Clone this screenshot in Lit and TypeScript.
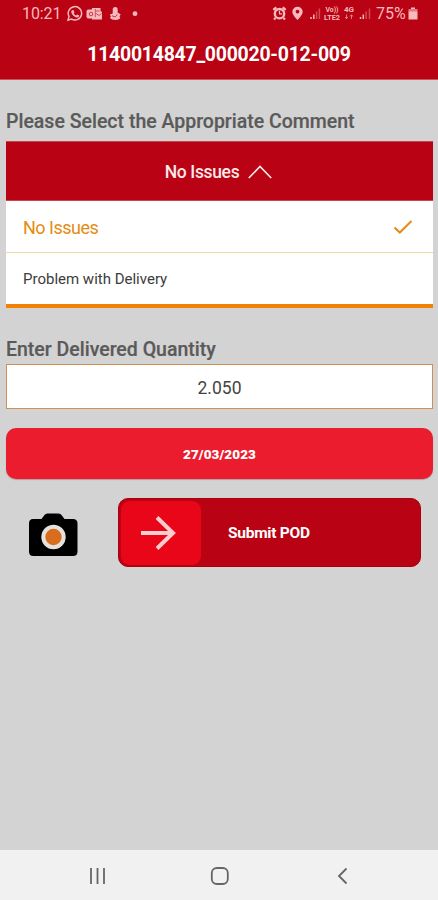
import { LitElement, html, css } from "lit";
import { customElement, state } from "lit/decorators.js";
import { classMap } from "lit/directives/class-map.js";

@customElement("status-bar")
class StatusBar extends LitElement {
  static styles = css`
    :host { display: flex; height: 28px; color: #f7b9bc; font: 400 16px/28px Roboto, sans-serif; }
    .time { margin-left: 22px; width: 45px; letter-spacing: -0.1px; white-space: nowrap; }
    .left { width: 78px; height: 28px; }
    .right { margin-left: auto; width: 104px; height: 28px; flex: none; }
    .tiny { font: 700 6.3px Roboto, sans-serif; fill: currentColor; }
    .battery-text { width: 31px; letter-spacing: 0; white-space: nowrap; }
    .battery { width: 10px; height: 28px; margin: 0 20px 0 1px; }
  `;

  render() {
    return html`
      <span class="time">10:21</span>
      <svg class="left" viewBox="67 0 78 28" fill="none" stroke="currentColor">
        <path stroke-width="1.5" d="M68 20.2l1-3.8a6.7 6.7 0 1 1 2.6 2.7z" />
        <path fill="currentColor" stroke="none" d="M72.1 10.2l1.3-.3 1.1 2.4-.8 1c.6 1.1 1.4 1.8 2.5 2.3l.9-1 2.1 1c0 1.6-1.3 2.2-2.6 1.9-2.7-.6-5.600-3.800-5.300-6 .1-.6.4-1 .8-1.300z" />
        <path fill="currentColor" stroke="none" d="M92 8h8.500v3l1.500 1v7.500H92z" />
        <rect x="87" y="10" width="8" height="8" rx="1" fill="currentColor" />
        <circle cx="91" cy="14" r="1.800" stroke="#b90213" stroke-width=".7" />
        <path stroke="#b90213" stroke-width=".6" d="M96 11h3.500M96 13.500l3 2 2.500-2M95.300 9v8" />
        <path fill="currentColor" stroke="none" d="M112.700 9.500a2.500 2.500 0 0 1 5 0v3.200l3 1.500-1.200 2.300.9 1.500c-1.800 2.500-8.200 2.600-10.600-.3l1.200-1-1.200-2.300 2.900-.8z" />
        <path stroke="#b90213" stroke-width=".8" d="M112 15.500c2 2 4.500 1.500 5-1" />
        <circle cx="135" cy="13.700" r="2.400" fill="currentColor" stroke="none" />
      </svg>
      <svg class="right" viewBox="272 0 104 28" fill="none" stroke="currentColor">
        <circle cx="279.500" cy="13.700" r="4.700" stroke-width="2.400" />
        <path stroke-width="2.200" d="M273.300 9.800l3-2.500M285.700 9.800l-3-2.500M275.500 18l-1.500 1.500M283.500 18l1.500 1.500" />
        <path stroke-width="1.200" d="M279.500 10.700v3.200h2.500" />
        <path fill="currentColor" stroke="none" fill-rule="evenodd" d="M297.500 6.700a5.200 5.200 0 0 1 5.200 5c0 3.300-5.200 8.300-5.200 8.300s-5.200-5-5.200-8.300a5.200 5.200 0 0 1 5.200-5zm0 3a1.900 1.900 0 1 0 0 3.800 1.900 1.900 0 0 0 0-3.800z" />
        <path stroke-width="1.500" d="M311 17v2M313.800 14.500v4.500" />
        <path stroke-width="1.500" opacity=".4" d="M316.600 11.500v7.500M319.400 8.500v10.500" />
        <g stroke="none">
          <text class="tiny" x="325.500" y="12" textLength="13" lengthAdjust="spacingAndGlyphs">Vo))</text>
          <text class="tiny" x="324" y="19.700" textLength="16" lengthAdjust="spacingAndGlyphs">LTE2</text>
          <text class="tiny" x="344" y="12" textLength="10" lengthAdjust="spacingAndGlyphs">4G</text>
        </g>
        <path opacity=".65" d="M346.500 14.500v4M345 17l1.500 1.700 1.500-1.700M351.500 19v-4M350 16.500l1.500-1.700 1.500 1.700" />
        <path stroke-width="1.500" d="M360.500 17v2M363.300 14.500v4.500" />
        <path stroke-width="1.500" opacity=".4" d="M366.100 11.500v7.500M369.500 8.500v10.500" />
      </svg>
      <span class="battery-text">75%</span>
      <svg class="battery" viewBox="0 0 10 28" fill="currentColor">
        <path d="M3 7.500h4v1.500H3z" /><path opacity=".65" d="M.5 9h9v3h-9z" /><path d="M.5 11.500h9v8h-9z" />
      </svg>
    `;
  }
}

@customElement("app-root")
class AppRoot extends LitElement {
  @state() private selected = "No Issues";
  private options = ["No Issues", "Problem with Delivery"];

  static styles = css`
    :host { display: flex; flex-direction: column; width: 438px; height: 900px; overflow: hidden; box-sizing: border-box; background: #d3d3d3; font-family: Roboto, sans-serif; }
    * { box-sizing: border-box; }
    header { height: 80px; flex: none; background: #b90213; border-bottom: 1px solid #c5565c; }
    h1 { margin: 0; height: 51px; color: #fff; font-size: 19.500px; letter-spacing: -.27px; line-height: 53px; font-weight: 700; text-align: center; white-space: nowrap; }
    main { flex: 1; padding: 26px 5px 0 6px; }
    h2 { margin: 0; height: 30px; line-height: 31px; font-size: 19.500px; font-weight: 500; color: #5a5a5a; white-space: nowrap; -webkit-text-stroke: .2px #5a5a5a; }
    .dropdown { margin-top: 5px; width: 427px; }
    .toggle { display: flex; align-items: center; justify-content: center; gap: 9px; width: 100%; height: 60px; padding: 1px 2px 0 0; border: 1px solid #c5464e; border-left: 0; border-right: 0; background: #b90213; color: #fce9ea; font: 500 17.500px Roboto, sans-serif; letter-spacing: -.35px; }
    .option { display: flex; align-items: center; justify-content: space-between; height: 51px; padding: 0 20px 0 17px; background: #fff; color: #3c3c3c; font-size: 15px; }
    .option.active { height: 52px; padding-top: 1px; border-bottom: 1px solid #eedca6; color: #e48c12; font-size: 18px; letter-spacing: -.5px; }
    .menu { border-bottom: 4px solid #f08205; height: 107px; }
    .quantity-label { margin-top: 26px; }
    .quantity { display: block; width: 427px; height: 45px; border: 1px solid #cf9058; background: #fff; padding: 2px 0 0; color: #444; font: 400 17.500px Roboto, sans-serif; letter-spacing: 0; text-align: center; outline: 0; border-radius: 0; }
    .date { display: block; width: 427px; height: 51px; margin-top: 19px; border: 0; border-radius: 10px; background: #eb1c2d; color: #fff; padding: 1px 0 0; font: 900 13.500px Roboto, sans-serif; letter-spacing: .1px; box-shadow: 0 1px 1px #b0a0a1; }
    .actions { display: flex; margin-top: 19px; }
    .camera { width: 50px; height: 46px; margin: 14px 40px 0 22px; }
    .submit { display: flex; align-items: center; width: 303px; height: 69px; padding: 2px; border-radius: 10px; background: #b90213; border: 1px solid #a9000c; }
    .thumb { display: grid; place-items: center; width: 80px; height: 64px; border-radius: 9px; background: #e90618; }
    .thumb svg { margin-right: 6px; }
    .submit-label { color: #fff; font-weight: 700; font-size: 15.500px; letter-spacing: -.25px; margin-left: 27px; padding-top: 1px; white-space: nowrap; }
    nav { height: 50px; flex: none; background: #f1f1f1; }
    nav svg { display: block; }
  `;

  render() {
    return html`
      <header>
        <status-bar></status-bar>
        <h1>1140014847_000020-012-009</h1>
      </header>
      <main>
        <h2>Please Select the Appropriate Comment</h2>
        <div class="dropdown">
          <button class="toggle">
            <span>${this.selected}</span>
            <svg width="24" height="14" viewBox="0 0 24 14" fill="none" stroke="#fce9ea" stroke-width="1.700"><path d="M.8 13L12 1.500 23.200 13" /></svg>
          </button>
          <div class="menu">
            ${this.options.map((option) => html`
              <div class=${classMap({ option: true, active: option === this.selected })} @click=${() => (this.selected = option)}>
                <span>${option}</span>
                ${option === this.selected ? html`<svg width="20" height="16" viewBox="0 0 20 16" fill="none" stroke="#e48c12" stroke-width="2"><path d="M1.500 8.500l5.300 5L18.500 2" /></svg>` : ""}
              </div>`)}
          </div>
        </div>
        <h2 class="quantity-label">Enter Delivered Quantity</h2>
        <input class="quantity" .value=${"2.050"} />
        <button class="date">27/03/2023</button>
        <div class="actions">
          <svg class="camera" viewBox="0 0 50 46">
            <path d="M5 7h8.500l3-4Q17.500 1.500 19.500 1.500h11q2 0 3 1.500l3 4H45q4.500 0 4.500 4.500v28q0 4.500-4.500 4.500H5.500Q1 44 1 39.500v-28Q1 7 5 7z" />
            <circle cx="25.500" cy="25" r="10.200" fill="#d96d1e" stroke="#e5e2de" stroke-width="4" />
          </svg>
          <div class="submit">
            <div class="thumb">
              <svg width="36" height="34" viewBox="0 0 36 34" fill="none" stroke="#ffccd0" stroke-width="4"><path d="M1 17h32M17 1.500L33 17 17 32.500" /></svg>
            </div>
            <span class="submit-label">Submit POD</span>
          </div>
        </div>
      </main>
      <nav>
        <svg width="438" height="50" viewBox="0 850 438 50" fill="none" stroke="#666" stroke-width="1.800">
          <path d="M91 868v16M97.500 868v16M104 868v16" />
          <rect x="211.800" y="868" width="16" height="16" rx="5" />
          <path d="M346.500 868.500l-7.500 7.500 7.500 7.500" />
        </svg>
      </nav>
    `;
  }
}
